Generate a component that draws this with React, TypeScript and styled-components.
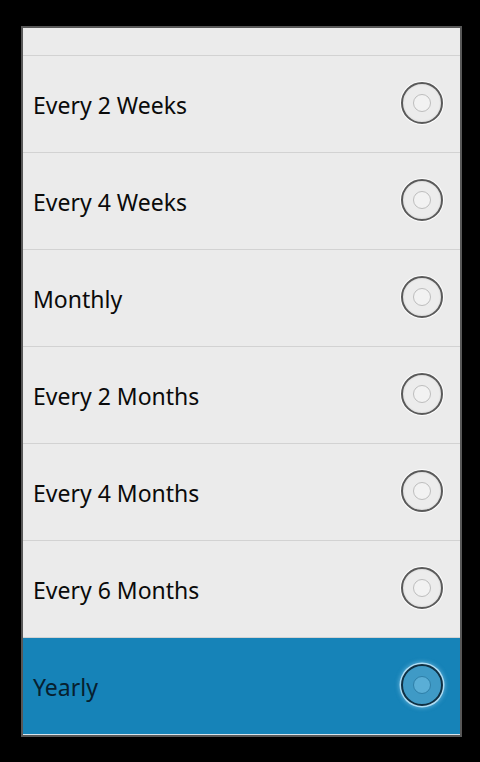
import React from "react";
import styled, { createGlobalStyle, css } from "styled-components";

const Global = createGlobalStyle`
  html, body { margin: 0; padding: 0; background: #000; }
  body { font-family: "Noto Sans", "Open Sans", sans-serif; }
`;

const Screen = styled.div`
  width: 480px;
  height: 762px;
  background: #000;
  padding: 26px 0 0 21px;
  box-sizing: border-box;
`;

const Panel = styled.div`
  width: 441px;
  box-sizing: border-box;
  border: 2px solid #585858;
  background: #ebebeb;
  display: flex;
  flex-direction: column;
`;

const TopStub = styled.div`
  height: 27px;
  border-bottom: 1px solid #d2d2d2;
`;

const Row = styled.div<{ $selected?: boolean }>`
  height: 96px;
  display: flex;
  align-items: center;
  justify-content: space-between;
  padding: 0 17px 0 10px;
  border-bottom: 1px solid #d2d2d2;
  ${(p) =>
    p.$selected &&
    css`
      background: #1683b8;
      border-bottom: 1px solid #d8e6ee;
    `}
`;

const Label = styled.span<{ $selected?: boolean }>`
  font-size: 23px;
  line-height: 30px;
  color: ${(p) => (p.$selected ? "#07202f" : "#0a0a0a")};
  padding-top: 1px;
`;

const Radio = styled.div<{ $selected?: boolean }>`
  width: 42px;
  height: 42px;
  box-sizing: border-box;
  border-radius: 50%;
  border: 2px solid ${(p) => (p.$selected ? "#0f2f42" : "#5a5a5a")};
  background: ${(p) => (p.$selected ? "#3f9ac6" : "#ececec")};
  box-shadow: ${(p) =>
    p.$selected
      ? "0 0 0 1.5px rgba(190,230,250,0.85), 0 0 4px 2px rgba(170,220,245,0.5)"
      : "0 0 0 1px rgba(255,255,255,0.9), inset 0 0 2px rgba(0,0,0,0.15)"};
  display: flex;
  align-items: center;
  justify-content: center;
  margin-top: -3px;
`;

const Dot = styled.div<{ $selected?: boolean }>`
  width: 18px;
  height: 18px;
  box-sizing: border-box;
  border-radius: 50%;
  border: 1px solid ${(p) => (p.$selected ? "#2e7fa8" : "#bdbdbd")};
  background: ${(p) => (p.$selected ? "#5aaed6" : "#f2f2f2")};
`;

const items = [
  "Every 2 Weeks",
  "Every 4 Weeks",
  "Monthly",
  "Every 2 Months",
  "Every 4 Months",
  "Every 6 Months",
  "Yearly",
];

export default function App() {
  return (
    <>
      <Global />
      <Screen>
        <Panel>
          <TopStub />
          {items.map((t) => {
            const sel = t === "Yearly";
            return (
              <Row key={t} $selected={sel}>
                <Label $selected={sel}>{t}</Label>
                <Radio $selected={sel}>
                  <Dot $selected={sel} />
                </Radio>
              </Row>
            );
          })}
        </Panel>
      </Screen>
    </>
  );
}
